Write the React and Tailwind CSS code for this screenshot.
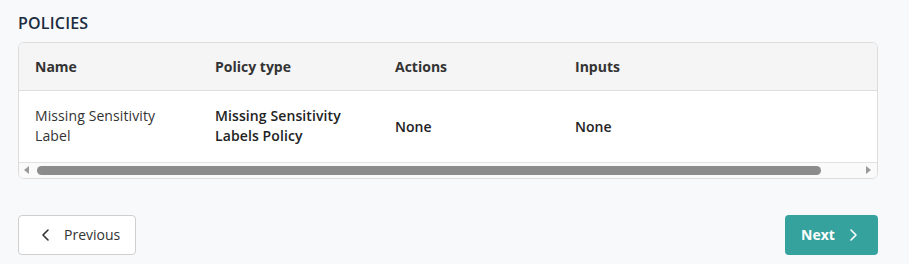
import React from 'react';

const cols = ['Name', 'Policy type', 'Actions', 'Inputs'];

function Chevron({ dir = 'left', className }) {
  return (
    <svg viewBox="0 0 16 16" className={className} fill="none" stroke="currentColor" strokeWidth="1.6" strokeLinecap="round" strokeLinejoin="round">
      {dir === 'left' ? <path d="M10 3 5 8l5 5" /> : <path d="M6 3l5 5-5 5" />}
    </svg>
  );
}

export default function App() {
  return (
    <div className="min-h-[264px] w-[909px] bg-[#f8f9fb] px-[18px] pt-[12px] text-[#333]" style={{ fontFamily: '"Open Sans", "Liberation Sans", sans-serif' }}>
      <h2 className="text-[16px] font-semibold leading-[22px] text-[#1b2d42] tracking-[0.2px]">POLICIES</h2>
      <div className="mt-[8px] w-[860px] overflow-hidden rounded-[6px] border border-[#dcdcdc] bg-white">
        <table className="w-full table-fixed text-[14px]">
          <colgroup>
            <col className="w-[180px]" />
            <col className="w-[180px]" />
            <col className="w-[180px]" />
            <col />
          </colgroup>
          <thead className="bg-[#f5f5f5]">
            <tr className="h-[47px] border-b border-[#dedede]">
              {cols.map(c => (
                <th key={c} className="pl-[16px] text-left font-bold text-[#333]">{c}</th>
              ))}
            </tr>
          </thead>
          <tbody>
            <tr className="h-[72px] border-b border-[#e2e2e2]">
              <td className="pl-[16px] pr-[20px] leading-[20px] text-[#333] tracking-[0.1px]">Missing Sensitivity Label</td>
              <td className="pl-[16px] pr-[10px] leading-[20px] font-semibold text-[#222] tracking-[0.1px]">Missing Sensitivity Labels Policy</td>
              <td className="pl-[16px] font-semibold text-[#222]">None</td>
              <td className="pl-[16px] font-semibold text-[#222]">None</td>
            </tr>
          </tbody>
        </table>
        <div className="flex h-[15px] items-center bg-[#fafafa]">
          <div className="flex w-[18px] justify-start pl-[5px]">
            <div className="h-0 w-0 border-y-[4px] border-r-[5px] border-y-transparent border-r-[#9a9a9a]" />
          </div>
          <div className="h-[9px] w-[784px] rounded-full bg-[#8c8c8c]" />
          <div className="flex-1" />
          <div className="flex w-[18px] justify-end pr-[6px]">
            <div className="h-0 w-0 border-y-[4px] border-l-[5px] border-y-transparent border-l-[#9a9a9a]" />
          </div>
        </div>
      </div>
      <div className="mt-[36px] flex w-[860px] items-center justify-between">
        <button className="flex h-[40px] w-[118px] items-center gap-[10px] rounded-[4px] border border-[#cfcfcf] bg-white pl-[19px] text-[14px] text-[#333]">
          <Chevron dir="left" className="h-[16px] w-[16px] text-[#333]" />
          Previous
        </button>
        <button className="flex h-[40px] w-[93px] items-center gap-[10px] rounded-[4px] bg-[#36a29e] pl-[16px] text-[14px] font-bold text-white">
          Next
          <Chevron dir="right" className="h-[16px] w-[16px] text-white" />
        </button>
      </div>
    </div>
  );
}
